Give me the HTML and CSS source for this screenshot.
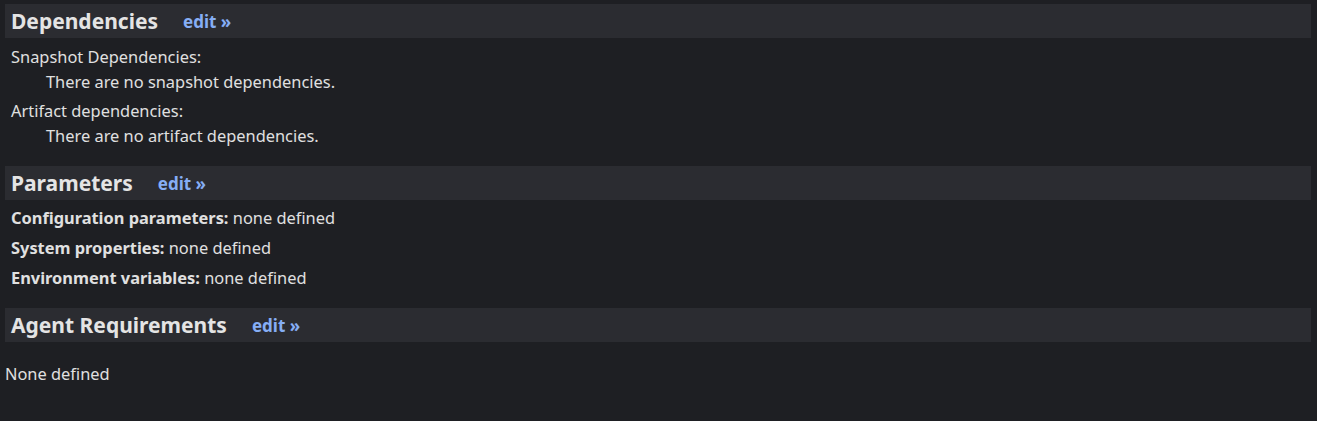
FILE: index.html
```html
<!DOCTYPE html>
<html>
<head>
<meta charset="utf-8">
<link rel="stylesheet" href="styles.css">
</head>
<body>
<div class="page">
  <section class="section">
    <h2 class="bar"><span class="bar-title">Dependencies</span><a class="edit" href="#">edit »</a></h2>
    <dl class="deps">
      <dt class="deps-label">Snapshot Dependencies:</dt>
      <dd class="deps-value">There are no snapshot dependencies.</dd>
      <dt class="deps-label">Artifact dependencies:</dt>
      <dd class="deps-value">There are no artifact dependencies.</dd>
    </dl>
  </section>
  <section class="section">
    <h2 class="bar"><span class="bar-title">Parameters</span><a class="edit" href="#">edit »</a></h2>
    <div class="params">
      <div class="param"><b>Configuration parameters:</b> none defined</div>
      <div class="param"><b>System properties:</b> none defined</div>
      <div class="param"><b>Environment variables:</b> none defined</div>
    </div>
  </section>
  <section class="section">
    <h2 class="bar"><span class="bar-title">Agent Requirements</span><a class="edit" href="#">edit »</a></h2>
    <p class="none">None defined</p>
  </section>
</div>
</body>
</html>
```
FILE: styles.css
```css
html, body {
  margin: 0;
  padding: 0;
  background: #1e1f23;
}
body {
  font-family: "Noto Sans", "Open Sans", sans-serif;
  font-size: 16.4px;
  color: #e0e0e0;
}
.page {
  padding: 4px 6px 0 5px;
}
.section {
  margin: 0;
}
.bar {
  margin: 0;
  height: 34px;
  background: #2b2c31;
  display: flex;
  align-items: center;
  padding-left: 6px;
}
.bar-title {
  font-size: 21px;
  font-weight: 700;
  color: #e4e4e4;
}
.edit {
  margin-left: 25px;
  font-size: 17px;
  font-weight: 700;
  color: #86aef5;
  text-decoration: none;
}
.deps {
  margin: 7px 0 18px 0;
  padding-left: 6px;
  line-height: 24px;
}
.deps-label {
  margin: 0;
}
.deps-value {
  margin: 0 0 5px 35px;
  line-height: 25px;
}
.deps-value:last-child {
  margin-bottom: 0;
}
.params {
  margin: 6px 0 18px 0;
  padding-left: 6px;
  display: flex;
  flex-direction: column;
  gap: 6px;
  line-height: 24px;
}
.param b {
  font-weight: 700;
}
.none {
  margin: 20px 0 0 0;
  line-height: 24px;
}
```
